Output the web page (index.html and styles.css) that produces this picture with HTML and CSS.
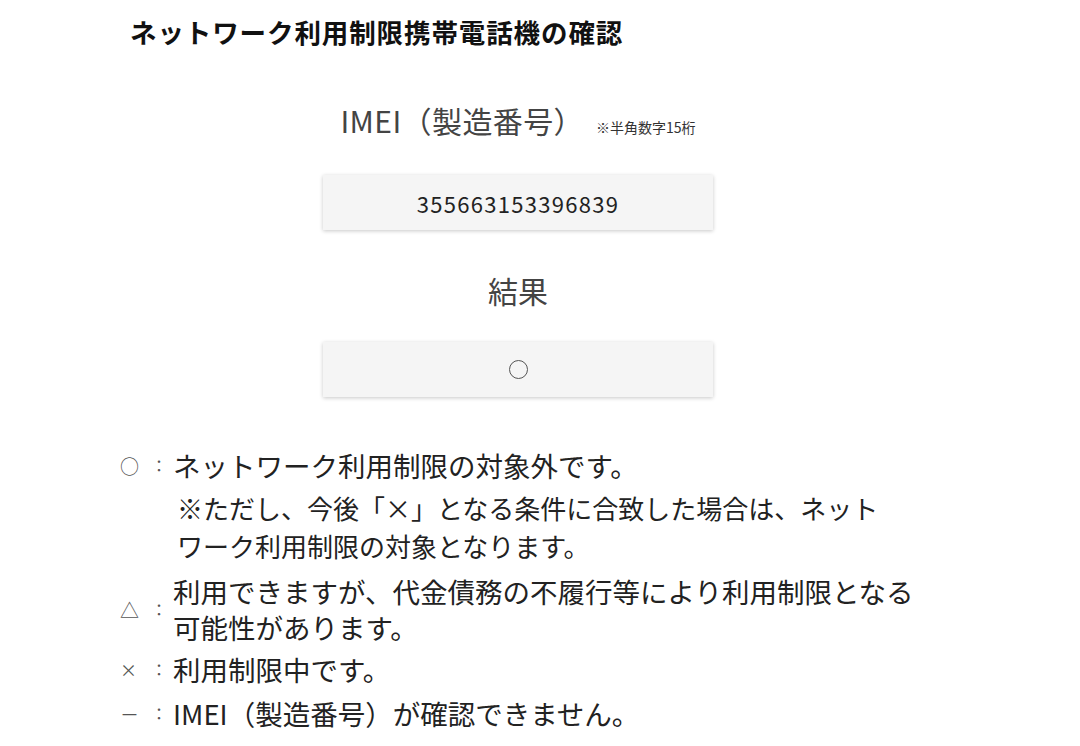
FILE: index.html
```html
<!DOCTYPE html>
<html lang="ja">
<head>
<meta charset="utf-8">
<link rel="stylesheet" href="styles.css">
</head>
<body>
<div class="page">
  <h1 class="title">ネットワーク利用制限携帯電話機の確認</h1>
  <section class="form">
    <div class="label label-imei">IMEI（製造番号）<span class="note-small">※半角数字15桁</span></div>
    <div class="box">355663153396839</div>
    <div class="label label-result">結果</div>
    <div class="box box-result"><span class="circle"></span></div>
  </section>
  <ul class="legend">
    <li class="item item-first">
      <span class="mark"><span class="sym">○</span><span class="colon">：</span></span>
      <div class="text">
        <p class="line">ネットワーク利用制限の対象外です。</p>
        <p class="sub">※ただし、今後「×」となる条件に合致した場合は、ネットワーク利用制限の対象となります。</p>
      </div>
    </li>
    <li class="item item-center">
      <span class="mark"><span class="sym">△</span><span class="colon">：</span></span>
      <div class="text"><p class="line tight">利用できますが、代金債務の不履行等により利用制限となる可能性があります。</p></div>
    </li>
    <li class="item item-x">
      <span class="mark"><span class="sym sym-x">×</span><span class="colon">：</span></span>
      <div class="text"><p class="line">利用制限中です。</p></div>
    </li>
    <li class="item item-dash">
      <span class="mark"><span class="sym">－</span><span class="colon">：</span></span>
      <div class="text"><p class="line">IMEI（製造番号）が確認できません。</p></div>
    </li>
  </ul>
</div>
</body>
</html>
```
FILE: styles.css
```css
html, body {
  margin: 0;
  padding: 0;
  background: #ffffff;
}
body {
  font-family: "Noto Sans CJK JP", "Noto Sans", sans-serif;
  color: #222;
}
.page {
  width: 1036px;
  padding-top: 14px;
}
.title {
  margin: 0 0 0 130px;
  font-size: 26.5px;
  line-height: 36px;
  font-weight: 700;
  color: #111;
  letter-spacing: 0.9px;
}
.form {
  display: flex;
  flex-direction: column;
  align-items: center;
}
.label {
  font-size: 30px;
  line-height: 40px;
  color: #444;
  white-space: nowrap;
}
.label-imei {
  margin-top: 50px;
  letter-spacing: 0.4px;
}
.note-small {
  font-size: 14px;
  margin-left: 12px;
  color: #333;
  letter-spacing: 0;
}
.box {
  width: 390px;
  height: 55px;
  margin-top: 28px;
  background: #f5f5f5;
  box-shadow: 0 1px 4px rgba(0,0,0,0.22);
  display: flex;
  align-items: center;
  justify-content: center;
  font-size: 22px;
  color: #222;
  letter-spacing: 1.3px;
}
.label-result {
  margin-top: 40px;
}
.box-result {
  margin-top: 32px;
}
.circle {
  width: 17px;
  height: 17px;
  border: 1.5px solid #555;
  border-radius: 50%;
}
.legend {
  list-style: none;
  margin: 49px 0 0 0;
  padding: 0 0 0 120px;
}
.item {
  display: flex;
  align-items: flex-start;
}
.item-center { align-items: center; margin-top: 8px; }
.item-x { margin-top: 5px; }
.item-dash { margin-top: 6px; }
.mark {
  width: 53px;
  display: flex;
  align-items: center;
  height: 38px;
  color: #555;
  flex: none;
}
.sym {
  font-size: 19px;
  width: 31px;
}
.sym-x { font-size: 17px; }
.colon {
  font-size: 16px;
}
.text {
  width: 760px;
  font-size: 27.5px;
  color: #222;
}
.line {
  margin: 0;
  line-height: 38px;
}
.line.tight {
  line-height: 36px;
}
.sub {
  margin: 5px 0 0 4px;
  font-size: 26px;
  line-height: 38px;
  width: 720px;
}
```
